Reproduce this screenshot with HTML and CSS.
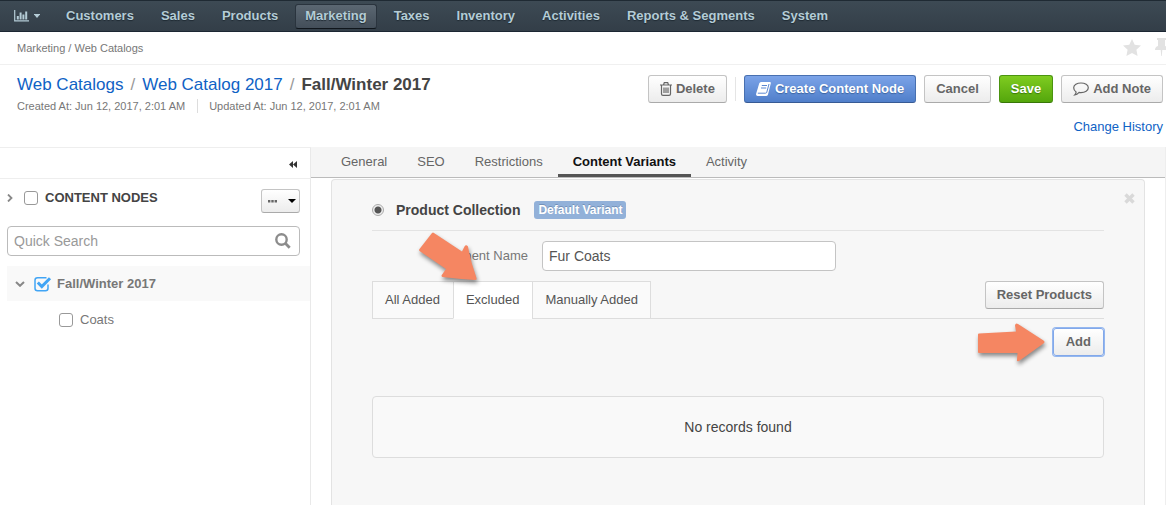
FILE: index.html
```html
<!DOCTYPE html>
<html lang="en">
<head>
<meta charset="utf-8">
<title>Fall/Winter 2017 - Web Catalogs</title>
<link rel="stylesheet" href="styles.css">
</head>
<body>
<nav class="main-nav">
  <button class="dashboard-toggle" type="button" aria-label="Dashboards">
    <svg width="15" height="12" viewBox="0 0 15 12"><path d="M.7 0v10.800H15" fill="none" stroke="currentColor" stroke-width="1.200"/><path d="M2.800 6h2v3.500h-2zM5.600 2.500h2v7h-2zM8.400 4.500h2v5h-2zM11.200 1.500h2v8h-2z" fill="currentColor"/></svg>
    <svg width="6" height="4" viewBox="0 0 6 4"><path d="M0 0h6v.6L3 4 0 .6z" fill="currentColor"/></svg>
  </button>
  <a class="nav-link" href="#">Customers</a>
  <a class="nav-link" href="#">Sales</a>
  <a class="nav-link" href="#">Products</a>
  <a class="nav-link nav-link-active" href="#">Marketing</a>
  <a class="nav-link" href="#">Taxes</a>
  <a class="nav-link" href="#">Inventory</a>
  <a class="nav-link" href="#">Activities</a>
  <a class="nav-link" href="#">Reports &amp; Segments</a>
  <a class="nav-link" href="#">System</a>
</nav>

<div class="crumbs">
  <span>Marketing / Web Catalogs</span>
  <div class="page-tools">
    <button class="icon-button" type="button" aria-label="Favorite"><svg width="18" height="17" viewBox="0 0 18 17"><path d="M9 0l2.700 5.700 6.300.8-4.600 4.300 1.200 6.200L9 14l-5.600 3 1.200-6.200L0 6.500l6.300-.8z" fill="currentColor"/></svg></button>
    <button class="icon-button" type="button" aria-label="Pin"><svg width="13" height="18" viewBox="0 0 13 18"><path d="M2 0h9v2h-1v6c2 .5 3 2 3 4H7.300L6.800 18h-.6L5.700 12H0c0-2 1-3.500 3-4V2H2z" fill="currentColor"/></svg></button>
  </div>
</div>

<header class="page-header">
  <div class="page-heading">
    <h1 class="page-title"><a href="#">Web Catalogs</a><span class="slash">/</span><a href="#">Web Catalog 2017</a><span class="slash">/</span><strong>Fall/Winter 2017</strong></h1>
    <div class="page-dates"><span>Created At: Jun 12, 2017, 2:01 AM</span><span class="date-updated">Updated At: Jun 12, 2017, 2:01 AM</span></div>
  </div>
  <div class="page-actions">
    <div class="button-row">
      <button class="btn" type="button"><svg width="12" height="14" viewBox="0 0 12 14" fill="none" stroke="currentColor" stroke-width="1.200"><path d="M0 3h12M3.500 3l.8-2.400h3.400L8.500 3M1.500 3v9q0 1.400 1.500 1.400h6q1.500 0 1.500-1.400V3M4 5.500V11M6 5.500V11M8 5.500V11"/></svg>Delete</button>
      <span class="divider"></span>
      <button class="btn btn-primary" type="button"><svg width="15" height="14" viewBox="0 0 15 14"><path d="M5 0h9q1 .2.800 1.200L12 12.500Q11.500 14 10 14H1.500Q-.2 13.500.2 11.500L3.200 1.500Q3.700 0 5 0z" fill="currentColor"/><path d="M5.800 3.500H11M5 6h5.200M1.800 11.200h7.700q1 0 1.300-1L13 2" fill="none" stroke="#5c88d2"/></svg>Create Content Node</button>
      <button class="btn" type="button">Cancel</button>
      <button class="btn btn-success" type="button">Save</button>
      <button class="btn" type="button"><svg width="16" height="14" viewBox="0 0 16 14" fill="none" stroke="currentColor" stroke-width="1.200"><path d="M8 1c4 0 7.300 2 7.300 4.800S12 10.600 8 10.600c-.7 0-1.300 0-1.900-.2C4.800 11.800 3.300 12.800 1.800 13c.9-.9 1.300-1.900 1.300-3C1.600 9.100.7 7.600.7 5.800.7 3 4 1 8 1z"/></svg>Add Note</button>
    </div>
    <a class="history-link" href="#">Change History</a>
  </div>
</header>

<div class="workspace">
  <aside class="sidebar">
    <div class="sidebar-bar">
      <button class="collapse" type="button" aria-label="Collapse sidebar"><svg width="8" height="7" viewBox="0 0 8 7"><path d="M4 0v7L0 3.500zM8 0v7L4 3.500z" fill="currentColor"/></svg></button>
    </div>
    <div class="tree-head">
      <svg class="arrow" width="6" height="8" viewBox="0 0 6 8"><path d="M1 .5L4.500 4 1 7.500" fill="none" stroke="currentColor" stroke-width="1.800"/></svg>
      <label class="tree-label"><input class="check" type="checkbox">CONTENT NODES</label>
      <button class="btn more" type="button" aria-label="More actions"><svg width="9" height="3" viewBox="0 0 9 3"><path d="M0 0h2.400v2.400H0zM3.300 0h2.400v2.400H3.300zM6.600 0H9v2.400H6.600z" fill="currentColor"/></svg><svg width="8" height="4" viewBox="0 0 8 4"><path d="M0 0h8L4 4z" fill="#000"/></svg></button>
    </div>
    <div class="search">
      <input class="search-input" type="text" placeholder="Quick Search" aria-label="Quick Search">
      <svg width="16" height="16" viewBox="0 0 16 16" fill="none" stroke="currentColor"><circle cx="6.500" cy="6.500" r="5.200" stroke-width="2.400"/><path d="M10.300 10.300l4.400 4.400" stroke-width="2.800"/></svg>
    </div>
    <div class="tree-row tree-row-open">
      <svg class="arrow" width="10" height="6" viewBox="0 0 10 6"><path d="M1 1l4 3.800L9 1" fill="none" stroke="currentColor" stroke-width="2"/></svg>
      <label class="tree-label"><input class="check check-hidden" type="checkbox" checked><svg width="18" height="16" viewBox="0 0 18 16" fill="none" stroke="#42a5f5"><path d="M12.500 1.800H3.500Q1 1.800 1 4.300v7.900q0 2.500 2.500 2.500h8q2.500 0 2.500-2.500V8.500" stroke-width="1.500"/><path d="M3.800 6.500l4 4L16 2.200" stroke-width="3"/></svg>Fall/Winter 2017</label>
    </div>
    <div class="tree-row tree-row-child">
      <label class="tree-label"><input class="check" type="checkbox">Coats</label>
    </div>
  </aside>

  <main class="content">
    <div class="tabs">
      <a class="tab" href="#">General</a>
      <a class="tab" href="#">SEO</a>
      <a class="tab" href="#">Restrictions</a>
      <a class="tab tab-active" href="#">Content Variants</a>
      <a class="tab" href="#">Activity</a>
    </div>
    <section class="variant">
      <button class="close" type="button" aria-label="Remove variant"><svg width="11" height="11" viewBox="0 0 11 11"><path d="M1.500 1.500l8 8M9.500 1.500l-8 8" stroke="currentColor" stroke-width="3.400"/></svg></button>
      <div class="variant-head">
        <label class="variant-label"><input class="radio" type="radio" name="variant" checked>Product Collection</label>
        <span class="badge">Default Variant</span>
      </div>
      <div class="field">
        <label class="field-label" for="segment-name">Segment Name</label>
        <input class="field-input" id="segment-name" type="text" value="Fur Coats">
      </div>
      <div class="segment-bar">
        <div class="segment-tabs">
          <button class="segment-tab" type="button">All Added</button>
          <button class="segment-tab segment-tab-active" type="button">Excluded</button>
          <button class="segment-tab" type="button">Manually Added</button>
          <svg class="pointer pointer-tab" width="70" height="62" viewBox="0 0 70 62"><path d="M5.500 21L18 5q1-1 2 0L48 23.500 50.500 18.500q1.500-2.500 3.500 0Q57 35 62.500 50q.5 2.500-2 2Q45 51 28.500 49q-2-1 0-3L32 41 5.500 23q-.8-1 0-2z" fill="#f58662"/></svg>
        </div>
        <button class="btn" type="button">Reset Products</button>
      </div>
      <div class="add-row">
        <svg class="pointer" width="68" height="44" viewBox="0 0 68 44"><path d="M1 14.500q0-1 1-1L39 11.500 38 5.500q.5-3 3-1.500L66.500 20.500q2 1.500 0 3L42 41q-2.500 1-2-1.500l.5-6.500H2q-1 0-1-1z" fill="#f58662"/></svg>
        <button class="btn btn-focus" type="button">Add</button>
      </div>
      <div class="empty">No records found</div>
    </section>
  </main>
</div>
</body>
</html>
```

FILE: styles.css
```css
* { box-sizing: border-box; }

body {
  margin: 0;
  height: 100vh;
  overflow: hidden;
  display: flex;
  flex-direction: column;
  background: #fff;
  color: #777;
  font: 13px/18px "Liberation Sans", Arial, sans-serif;
}

a { color: #0f62c5; text-decoration: none; }
button, input { font: inherit; color: inherit; margin: 0; }
button { cursor: pointer; }
svg { display: block; flex: none; }

.main-nav {
  display: flex;
  flex: none;
  align-items: center;
  gap: 7px;
  height: 32px;
  padding-left: 14px;
  background: linear-gradient(#3d4a54, #333e48);
  border-top: 1px solid #1f2a33;
  border-bottom: 1px solid #1c2733;
}
.dashboard-toggle {
  display: flex;
  align-items: center;
  gap: 5px;
  width: 35px;
  padding: 0;
  border: 0;
  background: none;
  color: #b4ccd6;
}
.nav-link {
  padding: 2px 9px 3px;
  border: 1px solid transparent;
  border-radius: 3px;
  color: #b4ccd6;
  font-weight: bold;
  text-shadow: 0 1px 1px #1f2a33;
  white-space: nowrap;
}
.nav-link-active {
  background: linear-gradient(#5b6772, #434e59);
  border-color: #2a343e;
  border-bottom-color: #10161c;
}

.crumbs {
  display: flex;
  flex: none;
  align-items: center;
  justify-content: space-between;
  height: 33px;
  padding-left: 17px;
  border-bottom: 1px solid #f0f0f0;
  font-size: 11px;
}
.page-tools { display: flex; align-items: center; gap: 14px; margin-right: -2px; padding-bottom: 2px; }
.icon-button { padding: 0; border: 0; background: none; color: #e2e2e2; }

.page-header {
  display: flex;
  flex: none;
  justify-content: space-between;
  padding: 10px 3px 0 17px;
  height: 82px;
}
.page-title { margin: 0; font-size: 17px; line-height: 20px; font-weight: normal; }
.page-title strong { color: #444; }
.slash { margin: 0 7px; color: #999; }
.page-dates { display: flex; align-items: center; margin-top: 4px; font-size: 11px; line-height: 14px; }
.date-updated { margin-left: 12px; padding-left: 11px; border-left: 1px solid #ddd; }
.page-actions { display: flex; flex-direction: column; align-items: flex-end; gap: 15px; }
.button-row { display: flex; align-items: center; gap: 8px; }
.divider { width: 1px; height: 24px; background: #e5e5e5; }

.btn {
  display: flex;
  align-items: center;
  gap: 4px;
  height: 28px;
  padding: 0 11px;
  border: 1px solid #c4c4c4;
  border-bottom-color: #aaa;
  border-radius: 3px;
  background: linear-gradient(#fff, #ececec);
  color: #666;
  font-weight: bold;
  white-space: nowrap;
}
.btn-primary {
  background: linear-gradient(#7ba3e8, #507fca);
  border-color: #4870b0;
  border-bottom-color: #375a94;
  color: #fff;
  text-shadow: 0 1px 1px #3c639f;
}
.btn-success {
  background: linear-gradient(#7fcc20, #54a60c);
  border-color: #4b9410;
  border-bottom-color: #387708;
  color: #fff;
  text-shadow: 0 1px 1px #397a08;
}
.btn-focus {
  padding: 0 12px;
  border-color: #82a8ea;
  box-shadow: 0 0 0 1px #94b7ef;
}

.workspace { display: flex; flex: 1; min-height: 0; }

.sidebar {
  flex: none;
  width: 311px;
  border-top: 1px solid #eee;
  border-right: 1px solid #e9e9e9;
}
.sidebar-bar {
  display: flex;
  align-items: center;
  justify-content: flex-end;
  height: 31px;
  padding: 2px 13px 0 0;
  border-bottom: 1px solid #eee;
}
.collapse { padding: 0; border: 0; background: none; color: #333; }
.tree-head {
  display: flex;
  align-items: flex-start;
  padding: 10px 10px 0 7px;
  color: #444;
  font-weight: bold;
}
.tree-head .arrow { margin: 5px 11px 0 0; }
.arrow { color: #888; }
.tree-label { display: flex; align-items: center; gap: 7px; }
.tree-head .btn { gap: 11px; height: 24px; margin-left: auto; padding: 0 3px 0 6px; }
.check {
  appearance: none;
  width: 14px;
  height: 14px;
  border: 1px solid #999;
  border-radius: 3px;
  background: #fff;
}
.check-hidden { position: absolute; opacity: 0; }
.search { display: flex; align-items: center; position: relative; margin: 13px 10px 10px 7px; color: #8c8c8c; }
.search-input {
  width: 100%;
  height: 30px;
  padding: 0 30px 0 6px;
  border: 1px solid #bbb;
  border-radius: 4px;
  background: #fff;
  font-size: 14px;
}
.search-input::placeholder { color: #999; opacity: 1; }
.search svg { position: absolute; right: 9px; }
.tree-row { display: flex; align-items: center; height: 35px; margin-left: 7px; }
.tree-row-open { gap: 9px; padding-left: 8px; background: #f9f9f9; font-weight: bold; }
.tree-row-open .tree-label { gap: 5px; }
.tree-row-child { height: 37px; padding-left: 52px; }

.content {
  display: flex;
  flex-direction: column;
  flex: 1;
  min-width: 0;
  border-right: 1px solid #eee;
}
.tabs {
  display: flex;
  flex: none;
  height: 31px;
  padding-left: 15px;
  background: #f5f5f5;
  border-bottom: 1px solid #bbb;
}
.tab { padding: 6px 15px 0; color: #666; white-space: nowrap; }
.tab-active { border-bottom: 3px solid #555; color: #111; font-weight: bold; }

.variant {
  position: relative;
  flex: 1;
  margin: 1px 20px 0;
  padding: 0 40px;
  border: 1px solid #e3e3e3;
  border-bottom: 0;
  border-radius: 4px 4px 0 0;
  background: #f7f7f7;
}
.close { position: absolute; top: 13px; right: 9px; padding: 0; border: 0; background: none; color: #d9d9d9; }
.variant-head {
  display: flex;
  align-items: center;
  gap: 14px;
  height: 51px;
  padding-top: 10px;
  border-bottom: 1px solid #e3e3e3;
}
.variant-label { display: flex; align-items: center; gap: 12px; color: #444; font-size: 14px; font-weight: bold; }
.radio {
  appearance: none;
  width: 12px;
  height: 12px;
  border: 1px solid #aaa;
  border-radius: 50%;
  background: radial-gradient(circle, #555 3px, #eee 4px);
}
.badge {
  padding: 0 4px;
  border-radius: 3px;
  background: #92b1d9;
  color: #fff;
  font-size: 12px;
  font-weight: bold;
  text-shadow: 0 -1px 0 #7390b6;
}
.field { display: flex; align-items: center; gap: 14px; margin: 10px 0; }
.field-label { width: 156px; text-align: right; }
.field-input {
  width: 294px;
  height: 30px;
  padding: 0 6px;
  border: 1px solid #c4c4c4;
  border-radius: 4px;
  background: #fff;
  color: #555;
  font-size: 14px;
}
.segment-bar {
  display: flex;
  align-items: flex-start;
  justify-content: space-between;
  height: 38px;
  border-bottom: 1px solid #ddd;
}
.segment-tabs { position: relative; display: flex; }
.segment-tab {
  height: 38px;
  padding: 0 13px 0 12px;
  border: 1px solid #ddd;
  border-right: 0;
  background: #fafafa;
  color: #555;
}
.segment-tab:nth-child(3) { padding-right: 12px; border-right: 1px solid #ddd; }
.segment-tab-active { background: #fff; border-bottom-color: #fff; }
.pointer { filter: drop-shadow(1px 3px 2px rgba(0, 0, 0, .45)); }
.pointer-tab { position: absolute; left: 42px; top: -53px; }
.add-row { display: flex; align-items: center; justify-content: flex-end; gap: 8px; margin-top: 1px; }
.empty {
  display: flex;
  align-items: center;
  justify-content: center;
  height: 62px;
  margin-top: 32px;
  border: 1px solid #ddd;
  border-radius: 4px;
  background: #f9f9f9;
  color: #444;
  font-size: 14px;
}
```
